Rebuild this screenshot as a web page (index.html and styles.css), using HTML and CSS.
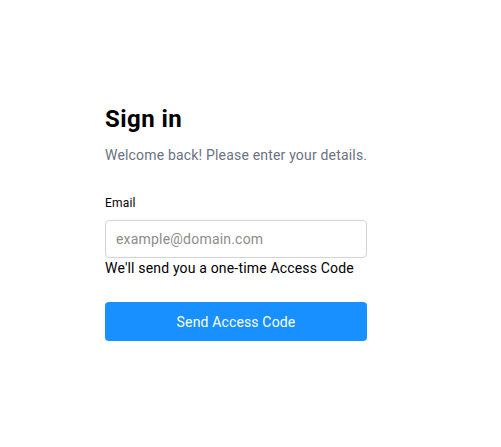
FILE: index.html
```html
<!DOCTYPE html>
<html lang="en">
<head>
<meta charset="utf-8">
<title>Sign in</title>
<link rel="stylesheet" href="styles.css">
</head>
<body>
<main class="page">
  <section class="card">
    <h1 class="title">Sign in</h1>
    <p class="subtitle">Welcome back! Please enter your details.</p>
    <form class="form">
      <label class="label" for="email">Email</label>
      <input class="input" id="email" type="email" placeholder="example@domain.com">
      <p class="hint">We'll send you a one-time Access Code</p>
      <button class="button" type="button">Send Access Code</button>
    </form>
  </section>
</main>
</body>
</html>
```
FILE: styles.css
```css
* { box-sizing: border-box; }
html, body { margin: 0; padding: 0; background: #fff; }
body { font-family: Roboto, "Noto Sans", sans-serif; color: #000; }
.page {
  padding: 103px 0 0 105px;
}
.card { width: 262px; }
.title {
  margin: 0;
  font-size: 24px;
  line-height: 32px;
  font-weight: 700;
  letter-spacing: 0.45px;
}
.subtitle {
  margin: 10px 0 0;
  font-size: 14px;
  line-height: 20px;
  color: #6b7280;
  letter-spacing: 0.18px;
  white-space: nowrap;
}
.form { display: flex; flex-direction: column; margin-top: 30px; }
.label { font-size: 12px; line-height: 16px; margin-bottom: 9px; letter-spacing: 0.2px; }
.input {
  height: 38px;
  width: 100%;
  border: 1px solid #d1d5db;
  border-radius: 4px;
  padding: 0 10px;
  font-family: inherit;
  font-size: 14px;
  letter-spacing: 0.2px;
  color: #000;
  outline: none;
}
.input::placeholder { color: #8c8c8c; }
.hint { margin: 0; font-size: 14px; line-height: 20px; letter-spacing: 0.17px; white-space: nowrap; }
.button {
  margin-top: 24px;
  height: 39px;
  width: 100%;
  border: 0;
  border-radius: 4px;
  background: #1890ff;
  color: #fff;
  font-family: inherit;
  font-size: 14px;
  letter-spacing: 0.15px;
}
```
